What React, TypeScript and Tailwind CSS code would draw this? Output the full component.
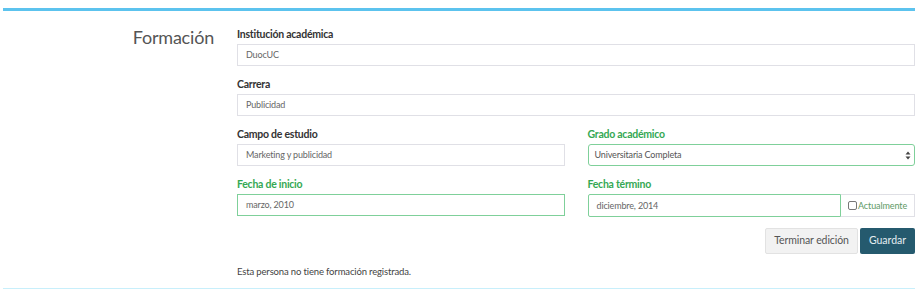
import { ReactNode } from "react";

const font = { fontFamily: "Lato, 'Liberation Sans', sans-serif" };

function Label({ children, green }: { children: ReactNode; green?: boolean }) {
  return (
    <p
      className={`h-[16px] mb-[2px] text-[10.5px] leading-[16px] tracking-[-0.25px] font-bold ${
        green ? "text-[#34a853]" : "text-[#333]"
      }`}
    >
      {children}
    </p>
  );
}

function Field({ value, green }: { value: string; green?: boolean }) {
  return (
    <div
      className={`h-[22px] flex items-center px-[8px] text-[9px] tracking-[-0.15px] text-[#666] bg-white border ${
        green ? "border-[#7fd09a]" : "border-[#e0e0e6]"
      }`}
    >
      {value}
    </div>
  );
}

export default function App() {
  return (
    <div className="w-[920px] h-[289px] bg-white overflow-hidden" style={font}>
      <div className="ml-[3px] w-[912px] pt-[8px]">
        <div className="h-[3px] bg-[#5cc3ee]" />
        <div className="flex pt-[15px]">
          <div className="w-[211px] text-right text-[18px] leading-[22px] tracking-[-0.2px] text-[#555]">
            Formación
          </div>
          <div className="ml-[23px] flex-1">
            <div className="mb-[10px]">
              <Label>Institución académica</Label>
              <Field value="DuocUC" />
            </div>
            <div className="mb-[10px]">
              <Label>Carrera</Label>
              <Field value="Publicidad" />
            </div>
            <div className="grid grid-cols-2 gap-x-[23px]">
              <div className="mb-[10px]">
                <Label>Campo de estudio</Label>
                <Field value="Marketing y publicidad" />
              </div>
              <div className="mb-[10px]">
                <Label green>Grado académico</Label>
                <div className="h-[22px] flex items-center justify-between pl-[6px] pr-[3px] text-[9px] tracking-[-0.15px] text-[#555] bg-white border border-[#7fd09a] rounded-[3px]">
                  <span>Universitaria Completa</span>
                  <svg width="6" height="9" viewBox="0 0 6 9" fill="#444">
                    <path d="M3 0.5 L5.5 3.5 H0.5 Z" />
                    <path d="M3 8.5 L5.5 5.5 H0.5 Z" />
                  </svg>
                </div>
              </div>
              <div>
                <Label green>Fecha de inicio</Label>
                <Field value="marzo, 2010" green />
              </div>
              <div>
                <Label green>Fecha término</Label>
                <div className="flex h-[23px]">
                  <div className="flex-1 flex items-center px-[8px] text-[9px] tracking-[-0.15px] text-[#666] border border-[#7fd09a] rounded-l-[2px]">
                    diciembre, 2014
                  </div>
                  <div className="w-[74px] flex items-center gap-[1px] pl-[7px] text-[9px] tracking-[-0.1px] text-[#5e9a66] border border-l-0 border-[#e0e0e6]">
                    <span className="w-[9px] h-[9px] border border-[#777] rounded-[2px] bg-white" />
                    <span>Actualmente</span>
                  </div>
                </div>
              </div>
            </div>
            <div className="flex justify-end gap-[2px] mt-[11px]">
              <button className="h-[26px] w-[93px] text-[10.5px] tracking-[-0.1px] text-[#555] bg-[#f2f2f2] border border-[#e2e2e2] rounded-[2px]">
                Terminar edición
              </button>
              <button className="h-[26px] w-[55px] text-[10.5px] text-[#e6eef1] bg-[#255a6e] rounded-[2px]">
                Guardar
              </button>
            </div>
            <p className="mt-[11px] text-[9.5px] leading-[14px] tracking-[-0.15px] text-[#444]">
              Esta persona no tiene formación registrada.
            </p>
          </div>
        </div>
        <div className="mt-[9px] h-[2px] bg-[#c8effb]" />
      </div>
    </div>
  );
}
